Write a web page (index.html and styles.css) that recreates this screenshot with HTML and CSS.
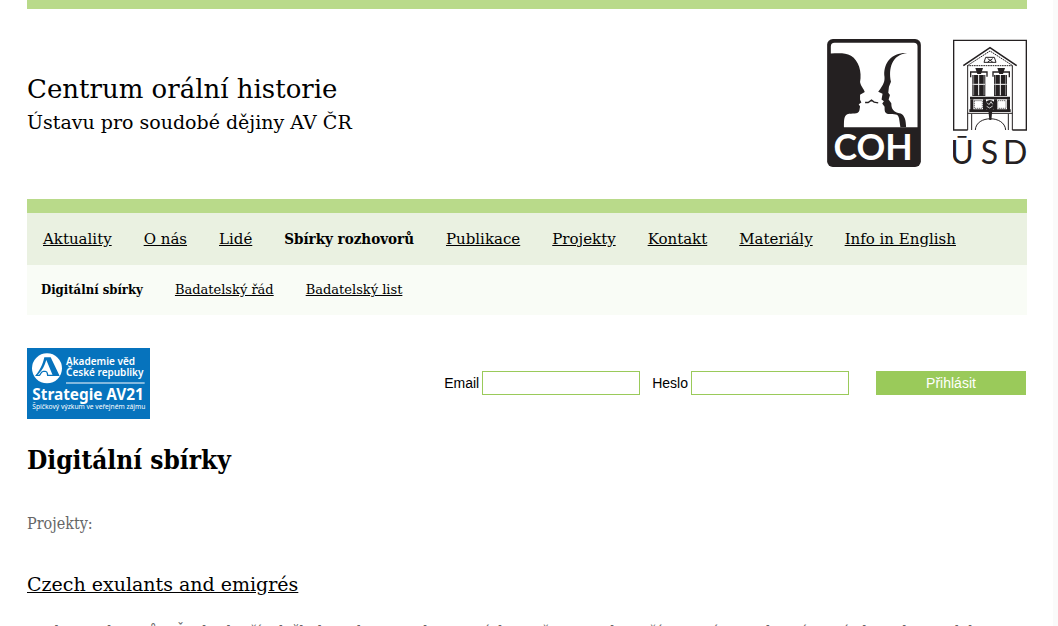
FILE: index.html
```html
<!DOCTYPE html>
<html lang="cs">
<head>
<meta charset="utf-8">
<title>Centrum orální historie</title>
<link rel="stylesheet" href="styles.css">
</head>
<body>
<div class="page">
<div class="wrap">
  <header class="header">
    <div class="brand">
      <div class="brand-name">Centrum orální historie</div>
      <div class="brand-sub">Ústavu pro soudobé dějiny AV ČR</div>
    </div>
    <div class="logos">
      <svg class="logo-coh" viewBox="38 27 279 381" role="img" aria-label="COH">
        <rect x="38" y="27" width="279" height="381" rx="17" fill="#242021"/>
        <path d="M60 38H296Q307 38 307 49V290H88C88 270 88 255 98 251C112 247 131 253 134 240L136 228L132 221L140 216L136 208V193L150 185C148 176 138 168 136 155C142 125 132 91 109 77C92 67 71 69 49 70V49Q49 38 60 38Z" fill="#fff"/>
        <path d="M276 69C230 67 207 98 208 134C211 151 207 162 190 184L203 190L200 207L207 212L202 219L209 229C209 241 209 248 219 250C239 251 249 248 252 263L256 290H273C273 268 268 254 257 249C235 244 229 236 229 218L221 207L225 194L220 187L222 169L228 154C220 117 230 74 276 69Z" fill="#242021"/>
        <path d="M151 216L160 216L170 209L178 215L190 217" fill="none" stroke="#242021" stroke-width="4"/>
        <text x="57" y="388" class="coh-text">COH</text>
      </svg>
      <svg class="logo-usd" viewBox="39 29 222 374" role="img" aria-label="ÚSD">
        <g fill="none" stroke="#242021" stroke-width="4">
          <path d="M83 300H41V31H259V300H217"/>
          <path d="M83 108V300M217 108V300M83 250H217M95 252V300M205 252V300" stroke-width="3"/>
          <path d="M70 107L150 53L230 107" stroke-width="5"/>
          <path d="M82 107L150 63L218 107Z" stroke-width="3" stroke-dasharray="5 2"/>
          <path d="M106 300C108 255 194 255 197 300" stroke-width="3"/>
          <path d="M137 82H163L168 97H132ZM143 86L158 96M158 86L143 96" stroke-width="3"/>
          <path d="M92 142V126H141V140M159 140V126H208V142" stroke-width="4"/>
        </g>
        <g fill="#242021">
          <path d="M106 114H129L123 132H112ZM172 114H195L189 132H178Z"/>
          <path d="M97 135H136V198H97ZM162 135H201V198H162Z"/>
          <path d="M90 200H210V208H90ZM88 238H212V246H88Z"/>
          <path d="M91 208H100V240H91ZM129 208H138V240H129ZM162 208H171V240H162ZM201 208H210V240H201Z"/>
          <circle cx="150" cy="226" r="16"/>
          <path d="M145 240H157L154 270H148Z"/>
        </g>
        <path d="M116 135V196M98 163H135M181 135V196M163 163H200" stroke="#fff" stroke-width="3"/>
        <path d="M101 135V196M132 135V196M166 135V196M197 135V196" stroke="#bbb" stroke-width="2"/>
        <path d="M141 218L147 224L153 215L158 223M140 229L149 234L158 228" fill="none" stroke="#ccc" stroke-width="3"/>
        <path d="M103 212H127V235H103ZM173 212H198V235H173Z" fill="#fff" stroke="#242021" stroke-width="2" stroke-dasharray="4 2"/>
        <text x="31 122 189" y="401" class="usd-text">ŪSD</text>
      </svg>
    </div>
  </header>
  <nav class="nav" aria-label="Hlavní">
    <a href="#">Aktuality</a>
    <a href="#">O nás</a>
    <a href="#">Lidé</a>
    <a href="#" class="active">Sbírky rozhovorů</a>
    <a href="#">Publikace</a>
    <a href="#">Projekty</a>
    <a href="#">Kontakt</a>
    <a href="#">Materiály</a>
    <a href="#">Info in English</a>
  </nav>
  <nav class="subnav" aria-label="Sbírky">
    <a href="#" class="active">Digitální sbírky</a>
    <a href="#">Badatelský řád</a>
    <a href="#">Badatelský list</a>
  </nav>
  <div class="tools">
    <a href="#" class="av-link" aria-label="Strategie AV21">
      <svg class="logo-av" viewBox="21 24 369 213">
        <rect x="21" y="24" width="369" height="213" fill="#0673bd"/>
        <circle cx="81" cy="85" r="45" fill="#fff"/>
        <path d="M73 52H92L119 108H99L79 60C73 78 67 90 58 99L50 108H45C60 92 68 74 73 52Z" fill="#0673bd"/>
        <path d="M48 106H58C63 104 62 94 70 94H76Q81 94 82 100L83 106H103" fill="none" stroke="#0673bd" stroke-width="4"/>
        <path d="M138 129H374" stroke="#fff" stroke-width="3"/>
        <g fill="#fff">
          <text x="138" y="74" class="av-name">Akademie věd</text>
          <text x="138" y="109" class="av-name">České republiky</text>
          <text x="37" y="181" class="av-title">Strategie AV21</text>
          <text x="37" y="208" class="av-note">Špičkový výzkum ve veřejném zájmu</text>
        </g>
      </svg>
    </a>
    <form class="login">
      <label for="email">Email</label>
      <input id="email" type="email">
      <label for="heslo" class="second">Heslo</label>
      <input id="heslo" type="password">
      <button type="button">Přihlásit</button>
    </form>
  </div>
  <main>
    <h1>Digitální sbírky</h1>
    <p class="intro">Projekty:</p>
    <h2><a href="#">Czech exulants and emigrés</a></h2>
    <p class="text">Soubor rozhovorů s Čechy, kteří odešli do exilu, a jejich vzpomínky na život v zahraničí a na návraty do své staré vlasti, kterou kdysi opustili.</p>
  </main>
</div>
</div>
</body>
</html>
```

FILE: styles.css
```css
* { box-sizing: border-box; }
html { height: 100%; overflow: hidden; }
body {
  margin: 0;
  height: 100%;
  overflow: hidden;
  padding-right: 5px;
  background: #fafafa;
  color: #000;
  font-family: "Roboto Slab", "DejaVu Serif", serif;
}
a { color: inherit; }
.page { background: #fff; min-height: 100%; padding: 0 26px 0 27px; }
.wrap { max-width: 1000px; margin: 0 auto; }
.header {
  display: flex;
  align-items: flex-start;
  justify-content: space-between;
  border-top: 9px solid #b9da8a;
  border-bottom: 14px solid #b9da8a;
  padding: 30px 0 32px;
}
.brand { padding-top: 32px; }
.brand-name { font-size: 26px; line-height: 36px; }
.brand-sub { font-size: 19px; line-height: 30px; }
.logos { display: flex; gap: 32px; }
.logo-coh { width: 94px; height: 128px; }
.logo-usd { width: 74px; height: 126px; }
.coh-text { font: 700 106px Lato, sans-serif; fill: #fff; }
.usd-text { font: 400 96px Lato, sans-serif; fill: #242021; }
.nav, .subnav { display: flex; align-items: center; }
.nav { background: #eaf1e1; padding: 14px 16px; gap: 32px; font-size: 15px; line-height: 24px; }
.subnav { background: #f9fcf6; padding: 14px; gap: 32px; font-size: 13px; line-height: 22px; }
.active, h1 { font-family: "Roboto Slab", "DejaVu Serif Condensed", "DejaVu Serif", serif; font-weight: 700; }
.active { text-decoration: none; }
.tools { display: flex; justify-content: space-between; align-items: center; margin-top: 33px; }
.av-link { display: flex; }
.logo-av { width: 123px; height: 71px; }
.av-name { font: 600 30px "Noto Sans", sans-serif; }
.av-title { font: 700 46px "Noto Sans", sans-serif; }
.av-note { font: 400 20px "Noto Sans", sans-serif; }
.login {
  display: flex;
  align-items: center;
  padding: 0 1px 2px 0;
  font: 14px "Liberation Sans", Arial, sans-serif;
}
.login input { width: 158px; height: 24px; margin-left: 3px; border: 1px solid #9aca5a; background: #fff; padding: 2px 4px; font: inherit; }
.second { margin-left: 12px; }
.login button { width: 150px; height: 24px; margin-left: 27px; border: 0; padding: 0; background: #9aca5a; color: #fff; font: inherit; }
h1 { margin: 21px 0 0; font-size: 26px; line-height: 40px; }
.intro, .text { font-family: "Roboto Slab", "DejaVu Serif Condensed", "DejaVu Serif", serif; color: #666; }
.intro { margin: 32px 0 0; font-size: 16px; line-height: 24px; }
h2 { margin: 32px 0 0; font-size: 19px; line-height: 32px; font-weight: 400; }
.text { margin: 19px 0 0; font-size: 16px; line-height: 28px; }
```
